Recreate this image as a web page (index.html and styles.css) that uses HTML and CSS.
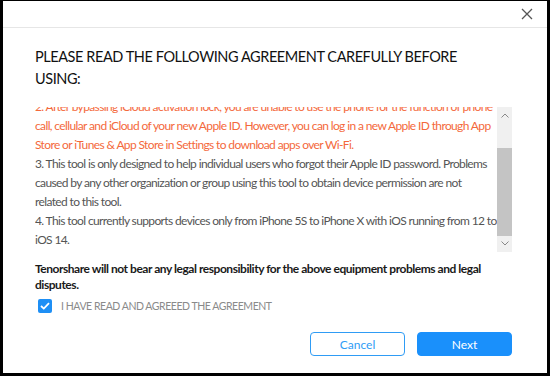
FILE: index.html
```html
<!DOCTYPE html>
<html>
<head>
<meta charset="utf-8">
<link rel="stylesheet" href="styles.css">
</head>
<body>
<div class="frame">
  <div class="dialog">
    <div class="header">
      <span class="close" aria-label="close">
        <svg width="12" height="12" viewBox="0 0 12 12"><path d="M1 1 L11 11 M11 1 L1 11" stroke="#555" stroke-width="1.3" fill="none"/></svg>
      </span>
    </div>
    <div class="body">
      <h1 class="title">PLEASE READ THE FOLLOWING AGREEMENT CAREFULLY BEFORE<br>USING:</h1>
      <div class="scrollbox">
        <div class="content">
          <p class="warn">2. After bypassing iCloud activation lock, you are unable to use the phone for the function of phone<br>call, cellular and iCloud of your new Apple ID. However, you can log in a new Apple ID through App<br>Store or iTunes &amp; App Store in Settings to download apps over Wi-Fi.</p>
          <p>3. This tool is only designed to help individual users who forgot their Apple ID password. Problems<br>caused by any other organization or group using this tool to obtain device permission are not<br>related to this tool.</p>
          <p>4. This tool currently supports devices only from iPhone 5S to iPhone X with iOS running from 12 to<br>iOS 14.</p>
        </div>
        <div class="scrollbar">
          <div class="arrow up"><svg width="8" height="5" viewBox="0 0 8 5"><path d="M0.5 4.5 L4 1 L7.5 4.5" stroke="#888" stroke-width="1" fill="none"/></svg></div>
          <div class="track"><div class="thumb"></div></div>
          <div class="arrow down"><svg width="8" height="5" viewBox="0 0 8 5"><path d="M0.5 0.5 L4 4 L7.5 0.5" stroke="#888" stroke-width="1" fill="none"/></svg></div>
        </div>
      </div>
      <p class="notice">Tenorshare will not bear any legal responsibility for the above equipment problems and legal<br>disputes.</p>
      <label class="agree">
        <span class="check"><svg width="10" height="8" viewBox="0 0 10 8"><path d="M1 4 L3.8 6.6 L9 1.2" stroke="#fff" stroke-width="1.8" fill="none"/></svg></span>
        <span class="agree-text">I HAVE READ AND AGREEED THE AGREEMENT</span>
      </label>
      <div class="actions">
        <button class="btn cancel">Cancel</button>
        <button class="btn next">Next</button>
      </div>
    </div>
  </div>
</div>
</body>
</html>
```

FILE: styles.css
```css
html, body {
  margin: 0;
  padding: 0;
  background: #000;
}
.frame {
  width: 550px;
  height: 376px;
  box-sizing: border-box;
  padding: 1px 3px 3px 3px;
  background: #000;
}
.dialog {
  width: 100%;
  height: 100%;
  background: #fff;
  font-family: Lato, "Noto Sans", sans-serif;
  display: flex;
  flex-direction: column;
}
.header {
  height: 26px;
  border-bottom: 1px solid #e6e6e6;
  display: flex;
  justify-content: flex-end;
  align-items: center;
  padding-right: 14px;
}
.close {
  display: flex;
  width: 12px;
  height: 12px;
}
.body {
  padding: 18px 35px 0 32px;
  display: flex;
  flex-direction: column;
}
.title {
  margin: 0;
  font-weight: normal;
  font-size: 14.5px;
  letter-spacing: -0.43px;
  line-height: 22px;
  color: #111;
  white-space: nowrap;
}
.scrollbox {
  margin-top: 17px;
  height: 145px;
  display: flex;
  overflow: hidden;
}
.content {
  flex: 1;
  margin-top: -10px;
  font-size: 12px;
  letter-spacing: -0.63px;
  line-height: 19px;
  color: #555;
  white-space: nowrap;
  overflow: hidden;
}
.content p {
  margin: 0;
}
.content .warn {
  color: #f4693c;
}
.scrollbar {
  width: 15px;
  display: flex;
  flex-direction: column;
  background: #f0f0f0;
}
.arrow {
  height: 17px;
  display: flex;
  align-items: center;
  justify-content: center;
}
.track {
  flex: 1;
  display: flex;
  flex-direction: column;
  padding-top: 24px;
}
.thumb {
  height: 88px;
  background: #c4c4c4;
}
.notice {
  margin: 9px 0 0 0;
  font-size: 12px;
  letter-spacing: -0.46px;
  line-height: 16px;
  font-weight: bold;
  color: #1a1a1a;
  white-space: nowrap;
}
.agree {
  margin-top: 6px;
  display: flex;
  align-items: center;
  gap: 9px;
  padding-left: 3px;
}
.check {
  width: 14px;
  height: 14px;
  border-radius: 2px;
  background: #1e8ff5;
  display: flex;
  align-items: center;
  justify-content: center;
}
.agree-text {
  font-size: 10.5px;
  letter-spacing: -0.45px;
  color: #8a8a8a;
}
.actions {
  margin-top: 19px;
  display: flex;
  justify-content: flex-end;
  gap: 12px;
}
.btn {
  width: 95px;
  height: 24px;
  border-radius: 4px;
  font-family: Lato, "Noto Sans", sans-serif;
  font-size: 12px;
  box-sizing: border-box;
  padding: 0;
}
.cancel {
  background: #fff;
  border: 1px solid #2f9cf5;
  color: #2f9cf5;
}
.next {
  background: #1a90fb;
  border: 1px solid #1a90fb;
  color: #fff;
}
```
